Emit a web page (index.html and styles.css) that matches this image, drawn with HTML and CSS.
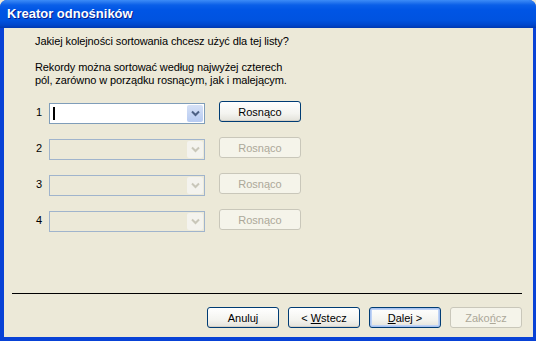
FILE: index.html
```
<html>
    <head>
        <title>Kreator odnośników</title>
        <link rel="stylesheet" href="styles.css">
    </head>
    <body>
        <div class="window">
            <div class="titlebar">Kreator odnośników</div>
            <div class="client">
                <p class="question">Jakiej kolejności sortowania chcesz użyć dla tej listy?</p>
                <p class="hint">Rekordy można sortować według najwyżej czterech<br>pól, zarówno w porządku rosnącym, jak i malejącym.</p>

                <div class="sort-rows">
                    <div class="sort-row">
                        <span class="num">1</span>
                        <div class="combo">
                            <span class="caret"></span>
                            <span class="drop"><svg width="9" height="7" viewBox="0 0 9 7"><polyline points="1,1.5 4.5,5 8,1.5" fill="none" stroke="currentColor" stroke-width="2"/></svg></span>
                        </div>
                        <button class="btn btn-order">Rosnąco</button>
                    </div>
                    <div class="sort-row">
                        <span class="num">2</span>
                        <div class="combo disabled">
                            <span class="drop"><svg width="9" height="7" viewBox="0 0 9 7"><polyline points="1,1.5 4.5,5 8,1.5" fill="none" stroke="currentColor" stroke-width="2"/></svg></span>
                        </div>
                        <button class="btn btn-order" disabled>Rosnąco</button>
                    </div>
                    <div class="sort-row">
                        <span class="num">3</span>
                        <div class="combo disabled">
                            <span class="drop"><svg width="9" height="7" viewBox="0 0 9 7"><polyline points="1,1.5 4.5,5 8,1.5" fill="none" stroke="currentColor" stroke-width="2"/></svg></span>
                        </div>
                        <button class="btn btn-order" disabled>Rosnąco</button>
                    </div>
                    <div class="sort-row">
                        <span class="num">4</span>
                        <div class="combo disabled">
                            <span class="drop"><svg width="9" height="7" viewBox="0 0 9 7"><polyline points="1,1.5 4.5,5 8,1.5" fill="none" stroke="currentColor" stroke-width="2"/></svg></span>
                        </div>
                        <button class="btn btn-order" disabled>Rosnąco</button>
                    </div>
                </div>

                <div class="spacer"></div>
                <hr class="separator">
                <div class="footer">
                    <button class="btn">Anuluj</button>
                    <button class="btn">&lt; <u>W</u>stecz</button>
                    <button class="btn btn-default"><u>D</u>alej &gt;</button>
                    <button class="btn" disabled>Zako<u>ń</u>cz</button>
                </div>
            </div>
        </div>
    </body>
</html>
```
FILE: styles.css
```
html, body {
    margin: 0;
    padding: 0;
    background: #ece9d8;
}
body {
    font-family: "Liberation Sans", Arial, sans-serif;
    font-size: 11px;
    color: #000;
}

.window {
    width: 536px;
    height: 341px;
    box-sizing: border-box;
    display: flex;
    flex-direction: column;
    background: #0842d6;
    border-radius: 7px 7px 0 0;
    overflow: hidden;
}
.titlebar {
    height: 28px;
    flex: none;
    display: flex;
    align-items: center;
    padding-left: 7px;
    padding-bottom: 1px;
    box-sizing: border-box;
    color: #fff;
    font-family: "Liberation Sans", Arial, sans-serif;
    font-weight: bold;
    font-size: 13px;
    text-shadow: 1px 1px 0 #0a1e8c;
    background: linear-gradient(#3c8cf8 0px, #2a7af0 2px, #0a5fe8 5px, #0055e5 10px, #0053e0 20px, #0046cc 25px, #0038b0 28px);
}
.client {
    flex: 1;
    margin: 0 3px 4px 4px;
    background: #ece9d8;
    display: flex;
    flex-direction: column;
    padding: 7px 0 0 0;
}

.question, .hint {
    margin: 0 0 0 31px;
    line-height: 13px;
    letter-spacing: -0.1px;
}
.hint {
    margin-top: 13px;
}

/* sort rows */
.sort-rows {
    margin-top: 14px;
    display: flex;
    flex-direction: column;
    gap: 14px;
}
.sort-row {
    display: flex;
    align-items: flex-start;
    height: 22px;
}
.num {
    width: 13px;
    margin-left: 32px;
    line-height: 13px;
    padding-top: 5px;
}
.combo {
    width: 156px;
    height: 21px;
    margin-top: 2px;
    box-sizing: border-box;
    border: 1px solid #7f9db9;
    background: #fff;
    display: flex;
    align-items: center;
    position: relative;
}
.combo.disabled {
    background: #ece9d8;
    border-color: #a0b4cc;
}
.caret {
    width: 2px;
    height: 13px;
    margin-left: 3px;
    background: #000;
}
.drop {
    position: absolute;
    right: 1px;
    top: 1px;
    bottom: 1px;
    width: 16px;
    display: flex;
    align-items: center;
    justify-content: center;
    color: #4d6185;
    background: linear-gradient(#d6e1f6, #b7cbf2);
    border-radius: 2px;
}
.combo.disabled .drop {
    background: #f4f3ee;
    color: #c9c7ba;
}

.btn {
    font-family: "Liberation Sans", Arial, sans-serif;
    font-size: 11px;
    color: #000;
    width: 72px;
    height: 21px;
    padding: 0;
    box-sizing: border-box;
    border: 1px solid #003c74;
    border-radius: 3px;
    background: linear-gradient(#ffffff, #f4f4f0 60%, #e3e2da);
    box-shadow: inset 0 -1px 0 #d6d0c5;
}
.btn-order {
    width: 82px;
    margin-left: 14px;
}
.btn:disabled {
    color: #aca899;
    border-color: #c9c7ba;
    background: #f5f4ea;
    box-shadow: none;
}
.btn-default {
    box-shadow: inset 0 0 0 1px #aac3f0, inset 0 0 0 2px #bfd3f6;
}

.spacer {
    flex: 1;
}
.separator {
    margin: 0 11px 0 8px;
    border: none;
    border-top: 1px solid #000;
    height: 0;
}
.footer {
    display: flex;
    justify-content: flex-end;
    gap: 9px;
    margin: 13px 11px 9px 0;
}
```
